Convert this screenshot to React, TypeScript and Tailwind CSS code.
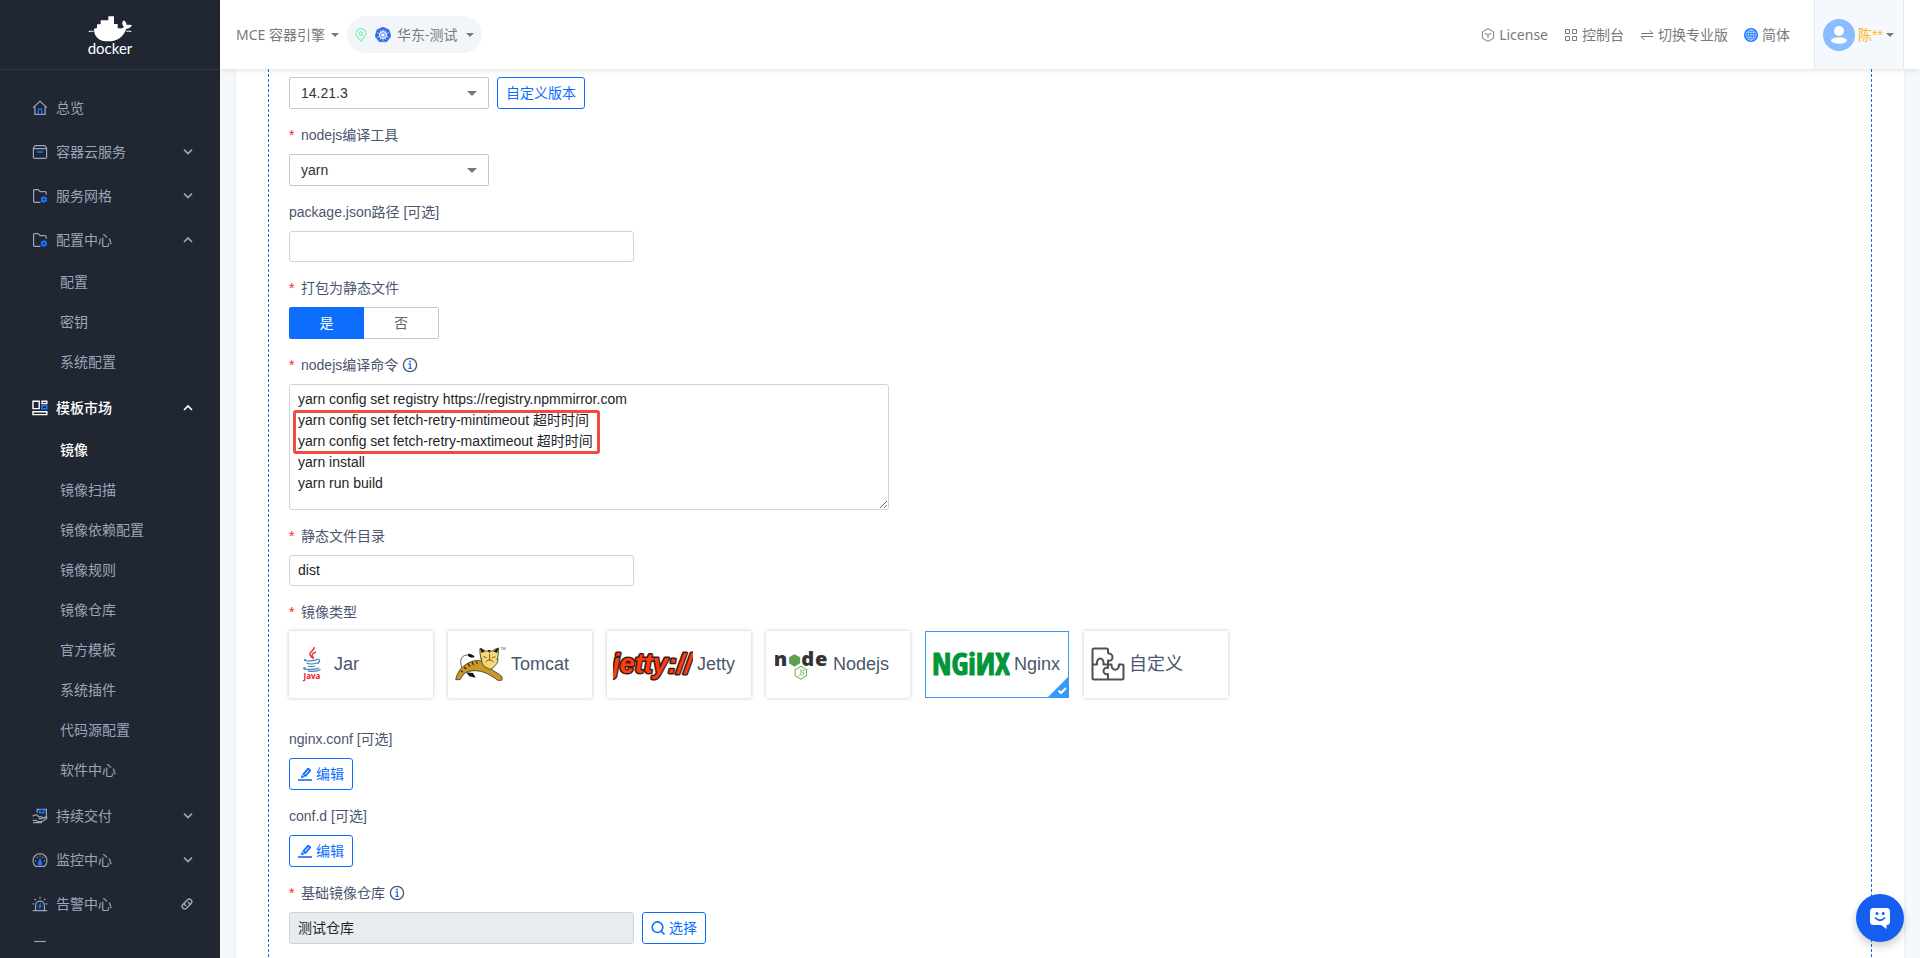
import React from "react";
import type { ReactNode } from "react";

const BLUE = "#1677ff";

type IconName =
  | "home" | "box" | "folder" | "template" | "deliver" | "gauge" | "alarm" | "more";

function MenuIcon({ name }: { name: IconName }) {
  const shapes: Record<IconName, ReactNode> = {
    home: (
      <>
        <path d="M1 7.6 8 1.4l7 6.2M2.9 6.4v8h10.2v-8" />
        <path d="M6.3 14V9.2h3.4V14" stroke={BLUE} />
      </>
    ),
    box: (
      <>
        <path d="M3.2 1.7h9.6L14.6 4v9.2q0 1.2-1.2 1.2H2.6q-1.2 0-1.2-1.2V4zM1.6 4.6h12.8" />
        <path d="M5.3 8h5.4" stroke={BLUE} strokeWidth="1.6" />
      </>
    ),
    folder: (
      <>
        <path d="M8.4 14.3H2.6q-1 0-1-1V2.6q0-1 1-1h3.6l2 2h5q1 0 1 1v2.2" />
        <circle cx="11.8" cy="11.6" r="2" stroke={BLUE} strokeWidth="2" />
        <path d="M11.8 8.4v1M11.8 13.8v1M9 10l.9.5M13.7 12.7l.9.5M9 13.2l.9-.5M13.7 10.5l.9-.5" stroke={BLUE} />
      </>
    ),
    template: (
      <>
        <path d="M1 1.2h6.2v7.4H1zM10 1.2h4.8v2.4H10zM1 11.8h13.8v2.8H1z" strokeWidth="1.4" />
        <path d="M10 5.8h4.8v2.9H10z" stroke={BLUE} strokeWidth="1.5" />
      </>
    ),
    deliver: (
      <>
        <path d="M5.2 4.8V1.4h9.2v7.4l-2.2 1.4" />
        <path d="M7.8 1.6h4v3.2h-4z" stroke={BLUE} strokeWidth="1.4" />
        <path d="M.6 8.2c2-1.8 4-1.6 5.4-.2l1 .9h2.6c1.4 0 1.4 1.8 0 1.8H6.4M9.8 10.4l3.6-1.3c1.5-.4 2 .8.9 1.6l-4 2.8H6L3.8 12.4H.6M1 14.6h9" />
      </>
    ),
    gauge: (
      <>
        <path d="M4 14.4A7 7 0 1 1 12 14.4z" />
        <path d="M3.2 8.6h1M11.8 8.6h1M4.9 5l.7.7M11.1 5l-.7.7M8 3.4v1" />
        <path d="M8 5.4 6 10.4a2.200 2.200 0 1 0 4 0z" fill={BLUE} stroke="none" />
      </>
    ),
    alarm: (
      <>
        <path d="M3.6 14V9.6a4.4 4.4 0 0 1 8.8 0V14M.8 14.6h14.4M8 .8v2M2.6 2.8l1.3 1.4M13.4 2.8l-1.3 1.4M.6 7.8h1.6M13.8 7.8h1.6" />
        <path d="M8.6 7 6.4 10.5h1.5L7.4 13l2.4-3.6H8.2z" fill={BLUE} stroke={BLUE} strokeWidth=".6" />
      </>
    ),
    more: <path d="M2.2 1.5h11.6" />,
  };
  return (
    <svg viewBox="0 0 16 16" className="size-4 shrink-0" fill="none" stroke="currentColor" strokeWidth="1.2" aria-hidden="true">
      {shapes[name]}
    </svg>
  );
}

function Chevron({ up = false }: { up?: boolean }) {
  return (
    <svg viewBox="0 0 10 10" className="size-2.5" fill="none" stroke="currentColor" strokeWidth="1.7" aria-hidden="true">
      <path d={up ? "M1 7 5 3l4 4" : "M1 2.6l4 4 4-4"} />
    </svg>
  );
}

function LinkIcon() {
  return (
    <svg viewBox="0 0 24 24" className="size-3" fill="none" stroke="currentColor" strokeWidth="3" strokeLinecap="round" aria-hidden="true">
      <path d="M9.500 15.500C5.500 12 7 9.500 9 7.500l4-4c4.500-4 11.500 2 7.500 7l-3 3.500" />
      <path d="M14.500 8.500c4 3.500 2.500 6 .5 8l-4 4c-4.500 4-11.500-2-7.500-7l3-3.500" />
    </svg>
  );
}

function Caret({ className = "" }: { className?: string }) {
  return (
    <svg viewBox="0 0 8 4" className={`h-1 w-2 shrink-0 ${className}`} fill="currentColor" aria-hidden="true">
      <path d="M0 0h8L4 4z" />
    </svg>
  );
}

interface MenuEntry {
  label: string;
  icon: IconName;
  active?: boolean;
  link?: boolean;
  leaf?: boolean;
  children?: string[];
}

const menu: MenuEntry[] = [
  { label: "总览", icon: "home", leaf: true },
  { label: "容器云服务", icon: "box" },
  { label: "服务网格", icon: "folder" },
  { label: "配置中心", icon: "folder", children: ["配置", "密钥", "系统配置"] },
  {
    label: "模板市场",
    icon: "template",
    active: true,
    children: ["镜像", "镜像扫描", "镜像依赖配置", "镜像规则", "镜像仓库", "官方模板", "系统插件", "代码源配置", "软件中心"],
  },
  { label: "持续交付", icon: "deliver" },
  { label: "监控中心", icon: "gauge" },
  { label: "告警中心", icon: "alarm", link: true },
];

function DockerLogo() {
  return (
    <a href="#" aria-label="docker" className="flex h-[70px] shrink-0 flex-col items-center border-b border-[#303643] pt-4 text-white">
      <svg viewBox="264 47 132 78" className="h-[26px] w-11" fill="currentColor" aria-hidden="true">
        <path d="M325 48h17v12h0v11h11v12c8 3 16 1 19-3-7-7-7-14-1-20 6 4 9 9 9 14 6-2 12-1 16 1-3 7-10 10-17 10-8 24-26 38-54 38-27 0-43-12-43-38l9-2V72h11V60h23z" />
        <path d="M266 94q8-3 15-1M379 93q8-2 15 1" stroke="currentColor" strokeWidth="3" fill="none" />
      </svg>
      <span className="font-['Lato','Open_Sans',sans-serif] text-[15px] leading-3">docker</span>
    </a>
  );
}

function Sidebar() {
  return (
    <aside className="flex w-[220px] shrink-0 flex-col overflow-hidden bg-[#212633] text-[#9ba5b7]">
      <DockerLogo />
      <nav className="pt-4">
        {menu.map((m) => (
          <div key={m.label}>
            <a
              href="#"
              className={`flex h-11 items-center gap-2 pr-[27px] pl-8 ${m.active ? "font-medium text-white" : ""}`}
            >
              <MenuIcon name={m.icon} />
              <span className="flex-1">{m.label}</span>
              {m.link ? <LinkIcon /> : !m.leaf && <Chevron up={!!m.children} />}
            </a>
            {m.children && (
              <ul className="pb-1">
                {m.children.map((c) => (
                  <li key={c}>
                    <a href="#" className={`flex h-10 items-center pl-[60px] ${c === "镜像" ? "font-medium text-white" : ""}`}>
                      {c}
                    </a>
                  </li>
                ))}
              </ul>
            )}
          </div>
        ))}
        <a href="#" aria-label="更多" className="flex h-11 items-center pl-8">
          <MenuIcon name="more" />
        </a>
      </nav>
    </aside>
  );
}

function KubeIcon() {
  return (
    <svg viewBox="0 0 32 32" className="size-4" aria-hidden="true">
      <path d="M16 0 28 5.600l4 13-8.500 11h-15L0 18.600l4-13z" fill="#326ce5" stroke="#326ce5" strokeLinejoin="round" />
      <g stroke="#fff" fill="none" strokeWidth="2">
        <circle cx="16" cy="16" r="7" />
        <path d="M16 4.500v23M5 11.500l22 9M5 20.500l22-9M10 6.500l12 19M22 6.500l-12 19" strokeWidth="1.400" />
      </g>
      <circle cx="16" cy="16" r="2.200" fill="#fff" />
    </svg>
  );
}

function Header() {
  return (
    <header className="relative z-10 flex h-[69px] shrink-0 items-center bg-white pr-4 font-['Noto_Sans','Noto_Sans_CJK_SC',sans-serif] text-[#7a7a7a] shadow-[0_1px_6px_rgba(0,0,0,0.12)]">
      <button type="button" className="ml-4 flex items-center gap-1.5">
        MCE 容器引擎
        <Caret />
      </button>
      <button type="button" className="ml-2 flex h-[37px] items-center rounded-full bg-[#f2f6fb] px-2">
        <svg viewBox="0 0 12 14" className="mr-2 h-3.5 w-3" fill="none" stroke="#86efac" strokeWidth="1.200" aria-hidden="true">
          <path d="M6 13C3 10 1 7.800 1 5.600a5 5 0 0 1 10 0C11 7.800 9 10 6 13z" />
          <circle cx="6" cy="5.600" r="1.700" />
        </svg>
        <KubeIcon />
        <span className="mr-2 ml-1.5">华东-测试</span>
        <Caret />
      </button>
      <nav className="ml-auto flex items-center gap-4">
        <a href="#" className="flex items-center gap-1">
          <svg viewBox="0 0 14 14" className="size-3.5" fill="none" stroke="currentColor" aria-hidden="true">
            <path d="M7 .6 12.600 3.800v6.400L7 13.400 1.400 10.200V3.800zM3.800 5.200 7 7l3.200-1.800M7 7v3.600" />
          </svg>
          License
        </a>
        <a href="#" className="flex items-center gap-1">
          <svg viewBox="0 0 14 14" className="size-3.5" fill="none" stroke="currentColor" aria-hidden="true">
            <path d="M1.500 1.500h4v4h-4zM8.500 1.500h4v4h-4zM1.500 8.500h4v4h-4zM8.500 8.500h4v4h-4z" />
          </svg>
          控制台
        </a>
        <a href="#" className="flex items-center gap-1">
          <svg viewBox="0 0 14 14" className="size-3.5" fill="none" stroke="currentColor" aria-hidden="true">
            <path d="M1 5.500h12L9.500 2M13 8.500H1L4.500 12" />
          </svg>
          切换专业版
        </a>
        <a href="#" className="flex items-center gap-1">
          <svg viewBox="0 0 14 14" className="size-3.5" aria-hidden="true">
            <circle cx="7" cy="7" r="7" fill={BLUE} />
            <g fill="none" stroke="#dbeafe" strokeWidth=".6">
              <ellipse cx="7" cy="7" rx="2.600" ry="5.200" />
              <circle cx="7" cy="7" r="5.200" />
              <path d="M7 1.800v10.400M1.800 7h10.400M2.600 4.400h8.800M2.600 9.600h8.800" />
            </g>
          </svg>
          简体
        </a>
      </nav>
      <button type="button" className="ml-6 flex h-full w-[90px] items-center gap-[3px] border-x border-[#e6eaef] bg-[#f5f8fc] pl-2">
        <svg viewBox="0 0 32 32" className="size-8 shrink-0" aria-hidden="true">
          <circle cx="16" cy="16" r="16" fill="#8bbcff" />
          <circle cx="16" cy="12" r="5" fill="#fff" />
          <ellipse cx="16" cy="21.500" rx="8" ry="3.300" fill="#fff" />
        </svg>
        <span className="font-['Liberation_Sans','Noto_Sans_CJK_SC',sans-serif] text-[#fdb913]">陈**</span>
        <Caret />
      </button>
    </header>
  );
}

function InfoIcon() {
  return (
    <svg viewBox="0 0 16 16" className="ml-1 size-4" fill="none" aria-hidden="true">
      <circle cx="8" cy="8" r="6.600" stroke="#4b566e" strokeWidth="1.300" />
      <path d="M6.500 6.800h1.800v4.400M6.300 11.300h3.600" stroke={BLUE} strokeWidth="1.300" />
      <circle cx="8" cy="4.500" r="1" fill={BLUE} />
    </svg>
  );
}

interface FieldProps {
  label: string;
  htmlFor?: string;
  required?: boolean;
  info?: boolean;
  children: ReactNode;
}

function Field({ label, htmlFor, required, info, children }: FieldProps) {
  return (
    <div className="pt-[15px]">
      <div className="mb-[9px] flex h-[21px] items-center">
        {required && <span className="w-3 text-[#ff2020]">*</span>}
        {htmlFor ? <label htmlFor={htmlFor}>{label}</label> : <span>{label}</span>}
        {info && <InfoIcon />}
      </div>
      {children}
    </div>
  );
}

function Dropdown({ id, value, label }: { id: string; value: string; label?: string }) {
  return (
    <div className="relative w-[200px]">
      <select
        id={id}
        aria-label={label}
        defaultValue={value}
        className="h-8 w-full appearance-none rounded-xs border border-[#c8c8c8] bg-white px-[11px] text-[#333]"
      >
        <option>{value}</option>
      </select>
      <svg viewBox="0 0 10 5" className="pointer-events-none absolute top-3.5 right-3 h-[5px] w-2.5" fill="#777" aria-hidden="true">
        <path d="M0 0h10L5 5z" />
      </svg>
    </div>
  );
}

function OutlineButton({ children }: { children: ReactNode }) {
  return (
    <button type="button" className="flex h-8 items-center gap-1 rounded-[3px] border border-[#0d6efd] bg-white px-2 text-[#0d6efd]">
      {children}
    </button>
  );
}

function EditButton() {
  return (
    <OutlineButton>
      <svg viewBox="0 0 14 14" className="size-3.5" aria-hidden="true">
        <path d="M0 13h14" stroke="#4f80ff" strokeWidth="2" />
        <path d="M5.400 7.200 10.200 1.600l2 1.800L7.400 9z" fill="none" stroke="#0d6efd" strokeWidth="1.800" strokeLinejoin="round" />
        <path d="M2.800 11.200l1-3.400 2.800 2.400z" fill="#0d6efd" />
      </svg>
      编辑
    </OutlineButton>
  );
}

function JavaLogo() {
  return (
    <svg viewBox="0 0 20 36" className="mr-3 h-9 w-5" fill="none" aria-hidden="true">
      <path d="M12 1c1.500 3-5.500 5-4 8 .5 1.300 2 2 2 3M14 6c-4 1.500-5 3-3 5 .8 1 .2 1.800-.4 2.300" stroke="#ed3237" strokeWidth="1.400" />
      <g stroke="#4b8bc4" strokeWidth="1.300">
        <path d="M4 13.500c-2.500.5-2 1.300 1 1.400 4 .2 8-.2 10-1.200M4.600 17.200c2 .9 7 .8 9.600 0M5.600 20c2 .7 5.500.6 7.600 0" />
        <path d="M15 13.300c3.500-.8 3.600 2.900-.4 4.300M3.500 21.300c-3.500.7-2.500 2 4.500 2.100 5 0 9-.7 8.500-1.800M6 25c4 .6 10 .1 12.500-1.700" />
      </g>
      <text x="10" y="33" textAnchor="middle" fill="#ed2024" fontSize="8" fontWeight="700" fontFamily="'Open Sans', sans-serif">Java</text>
    </svg>
  );
}

function TomcatLogo() {
  return (
    <svg viewBox="524 140 156 108" className="mr-1 h-9 w-[52px]" strokeLinejoin="round" aria-hidden="true">
      <path d="M547 211c-10-20-8-42 12-44 8-1 14 1 20 4" fill="none" stroke="#444" strokeWidth="2.500" />
      <path d="M563 164c6-2 15 3 20 8-7 5-16 2-20-2z" fill="#111" />
      <path d="M557 219l10 12 19 4-8-14z" fill="#111" />
      <path d="M526 241c4-24 22-46 50-55 18-6 30-2 42 10 10 12 24 20 40 30 8 5 9 11 6 17h-12c-12-10-34-24-52-27-16-4-34-2-44 4-8 5-12 13-17 21z" fill="#c99b22" stroke="#333" strokeWidth="2.500" />
      <path d="M563 193l6 9M575 188l5 9M588 186l3 8M551 203l7 6M542 214l6 5" stroke="#2c2208" strokeWidth="3.500" />
      <path d="M599 147c8 2 14 6 18 9 7-2 13-2 18 0 4-4 10-8 19-10 1 10 0 20-2 29 3 11-2 18-8 24-6 9-16 13-22 8-11-5-18-14-19-25-3-12-5-24-4-35z" fill="#f8d877" stroke="#333" strokeWidth="2.500" />
      <path d="M599 146l15 10-10 5zM655 145l-16 11 11 5zM622 153h9l-4 8z" fill="#111" />
      <path d="M609 172l10 3M635 175l10-3M615 189l8-7h10l7 7M628 164v17M601 178l5 2M653 178l-5 2" stroke="#5c430d" strokeWidth="2.500" fill="none" />
      <path d="M624 181h9l-4 5z" fill="#b0701c" />
      <text x="660" y="153" fontSize="11" fill="#444" fontFamily="'Liberation Sans', sans-serif">TM</text>
    </svg>
  );
}

function JettyLogo() {
  return (
    <svg viewBox="0 0 80 36" className="mr-1 h-9 w-20 shrink-0" aria-hidden="true">
      <text
        x="39"
        y="27"
        textAnchor="middle"
        fontSize="27"
        fontWeight="700"
        fontStyle="italic"
        fontFamily="'Liberation Sans Narrow', 'Liberation Sans', sans-serif"
        fill="#ff3c0a"
        stroke="#3a1d16"
        strokeWidth="3"
        strokeLinejoin="round"
        paintOrder="stroke"
      >
        jetty://
      </text>
    </svg>
  );
}

function NodeLogo() {
  return (
    <svg viewBox="75 145 158 100" className="mr-[5px] h-[34px] w-[53px]" fill="none" aria-hidden="true">
      <g fill="#333" fontSize="60" fontWeight="800" fontFamily="'Open Sans', 'Inter', sans-serif">
        <text x="71" y="201">n</text>
        <text x="153" y="201">d</text>
        <text x="194" y="201">e</text>
      </g>
      <path d="M133 166l17 9v18l-17 10-16-10v-18z" fill="#5fa04e" />
      <path d="M152 202l17 10v18l-17 10-17-10v-18z" stroke="#6cb15b" strokeWidth="3" />
      <path d="M152 210v14q0 5-6 5M163 214h-6q-4 4 0 6h3q4 4-1 8h-5" stroke="#6cb15b" strokeWidth="2.500" />
      <circle cx="173" cy="211" r="2" fill="#8cc97d" />
    </svg>
  );
}

function NginxLogo() {
  return (
    <svg viewBox="0 0 78 36" className="mr-1 h-9 w-[78px] shrink-0" aria-hidden="true">
      <text
        x="39"
        y="29"
        textAnchor="middle"
        fontSize="31"
        fontWeight="700"
        fontFamily="'Liberation Sans Narrow', 'Open Sans Condensed', 'Liberation Sans', sans-serif"
        fill="#009639"
        stroke="#009639"
        strokeWidth="1"
        strokeLinejoin="round"
      >
        NGiИX
      </text>
    </svg>
  );
}

function PuzzleIcon() {
  return (
    <svg viewBox="0 0 34 34" className="mr-1 size-[34px]" fill="none" stroke="#505050" strokeWidth="2" strokeLinejoin="round" aria-hidden="true">
      <path d="M16.500 7V3q0-1.500-1.500-1.500H3Q1.500 1.500 1.500 3v28q0 1.500 1.500 1.500h28q1.500 0 1.500-1.500V18.500q0-1-1-1H28c.5 7-8 7-7.500 0h-4V13.500c6 1 6-7.500 0-6.500z" stroke="none" />
      <path d="M17 6.500V3q0-1.500-1.500-1.500H3Q1.500 1.500 1.500 3v28q0 1.500 1.500 1.500h28q1.500 0 1.500-1.500V18.500q0-1-1-1H28c.5 7-8 7-7.500 0H17v-4c6 1.500 6-8 0-7" />
      <path d="M1.500 17.500H6c-1-8 7.500-8 6.500 0H17v3.500c-6-1.500-6 7.500 0 6v5.500" />
    </svg>
  );
}

const imageTypes: { name: string; logo: ReactNode; pad: string; selected?: boolean }[] = [
  { name: "Jar", logo: <JavaLogo />, pad: "pl-[13px]" },
  { name: "Tomcat", logo: <TomcatLogo />, pad: "pl-[7px]" },
  { name: "Jetty", logo: <JettyLogo />, pad: "pl-1.5" },
  { name: "Nodejs", logo: <NodeLogo />, pad: "pl-[9px]" },
  { name: "Nginx", logo: <NginxLogo />, pad: "pl-1.5", selected: true },
  { name: "自定义", logo: <PuzzleIcon />, pad: "pl-[7px]" },
];

function TypeCard({ name, logo, pad, selected }: (typeof imageTypes)[number]) {
  return (
    <button
      type="button"
      aria-pressed={!!selected}
      className={`relative flex h-[67px] w-36 items-center bg-white pb-0.5 text-lg ${pad} ${
        selected ? "border border-[#3698fb]" : "shadow-[0_0_4px_rgba(0,0,0,0.22)]"
      }`}
    >
      {logo}
      {name}
      {selected && (
        <svg viewBox="0 0 20 20" className="absolute right-0 bottom-0 size-5" aria-hidden="true">
          <path d="M20 0v20H0z" fill="#3698fb" />
          <path d="M10.500 13.500l2.500 2.500 5-5" stroke="#fff" strokeWidth="2.200" fill="none" />
        </svg>
      )}
    </button>
  );
}

const commands = `yarn config set registry https://registry.npmmirror.com
yarn config set fetch-retry-mintimeout 超时时间
yarn config set fetch-retry-maxtimeout 超时时间
yarn install
yarn run build
`;

const inputBase = "block w-[345px] rounded-[3px] border border-[#ced4da] px-2 pb-0.5 text-[#212529]";

function BuildForm() {
  return (
    <form className="border-x border-dashed border-[#0d6efd] px-5 pt-2 pb-12">
      <div className="flex gap-2">
        <Dropdown id="node-version" value="14.21.3" label="nodejs版本" />
        <OutlineButton>自定义版本</OutlineButton>
      </div>
      <Field label="nodejs编译工具" htmlFor="tool" required>
        <Dropdown id="tool" value="yarn" />
      </Field>
      <Field label="package.json路径 [可选]" htmlFor="pkg">
        <input id="pkg" className={`${inputBase} h-[31px]`} />
      </Field>
      <Field label="打包为静态文件" required>
        <div className="flex h-8">
          <button type="button" aria-pressed="true" className="w-[75px] rounded-l-xs bg-[#0d6efd] text-white">是</button>
          <button type="button" aria-pressed="false" className="w-[75px] rounded-r-xs border border-l-0 border-[#c8c8c8] text-[#666]">否</button>
        </div>
      </Field>
      <Field label="nodejs编译命令" htmlFor="cmd" required info>
        <div className="relative max-w-[600px]">
          <textarea
            id="cmd"
            defaultValue={commands}
            className="block h-[126px] w-full resize overflow-hidden rounded-[3px] border border-[#ced4da] px-2 py-1 leading-[21px] text-[#212529]"
          />
          <div className="pointer-events-none absolute top-[26px] left-1 h-11 w-[307px] rounded-[3px] border-3 border-[#f24a3d]" />
        </div>
      </Field>
      <Field label="静态文件目录" htmlFor="dist" required>
        <input id="dist" defaultValue="dist" className={`${inputBase} h-[31px]`} />
      </Field>
      <Field label="镜像类型" required>
        <div className="mb-[15px] flex flex-wrap gap-[15px]">
          {imageTypes.map((t) => (
            <TypeCard key={t.name} {...t} />
          ))}
        </div>
      </Field>
      <Field label="nginx.conf [可选]">
        <EditButton />
      </Field>
      <Field label="conf.d [可选]">
        <EditButton />
      </Field>
      <Field label="基础镜像仓库" htmlFor="repo" required info>
        <div className="flex gap-2">
          <input id="repo" readOnly defaultValue="测试仓库" className={`${inputBase} h-8 bg-[#e9ecef]`} />
          <OutlineButton>
            <svg viewBox="0 0 14 14" className="size-3.5" fill="none" stroke="#0d6efd" strokeWidth="1.600" aria-hidden="true">
              <circle cx="6.500" cy="6.200" r="5.300" />
              <path d="M10 10l3.500 3.500" />
            </svg>
            选择
          </OutlineButton>
        </div>
      </Field>
    </form>
  );
}

export default function App() {
  return (
    <div className="flex h-screen overflow-hidden bg-[#f5f9fc] font-['Liberation_Sans','Noto_Sans_CJK_SC',sans-serif] text-sm text-[#4b566e]">
      <Sidebar />
      <div className="flex min-w-0 flex-1 flex-col">
        <Header />
        <main className="min-h-0 flex-1 overflow-hidden px-4">
          <div className="min-h-full bg-white px-8 shadow-[0_0_4px_rgba(0,0,0,0.08)]">
            <BuildForm />
          </div>
        </main>
      </div>
      <button
        type="button"
        aria-label="客服"
        className="fixed right-4 bottom-4 z-20 flex size-12 items-center justify-center rounded-full bg-[#155eef] shadow-[0_4px_8px_rgba(0,0,0,0.2)]"
      >
        <svg viewBox="0 0 20 21" className="h-[21px] w-5" aria-hidden="true">
          <path d="M3.500 0h13Q20 0 20 3.500v10q0 3.500-3.500 3.500v4L11 17H3.500Q0 17 0 13.500v-10Q0 0 3.500 0z" fill="#fff" />
          <circle cx="7" cy="5.500" r="1.500" fill="#155eef" />
          <circle cx="13.200" cy="5.500" r="1.500" fill="#155eef" />
          <path d="M5.500 10q4.500 4.500 9 0" stroke="#155eef" strokeWidth="1.700" fill="none" strokeLinecap="round" />
        </svg>
      </button>
    </div>
  );
}
